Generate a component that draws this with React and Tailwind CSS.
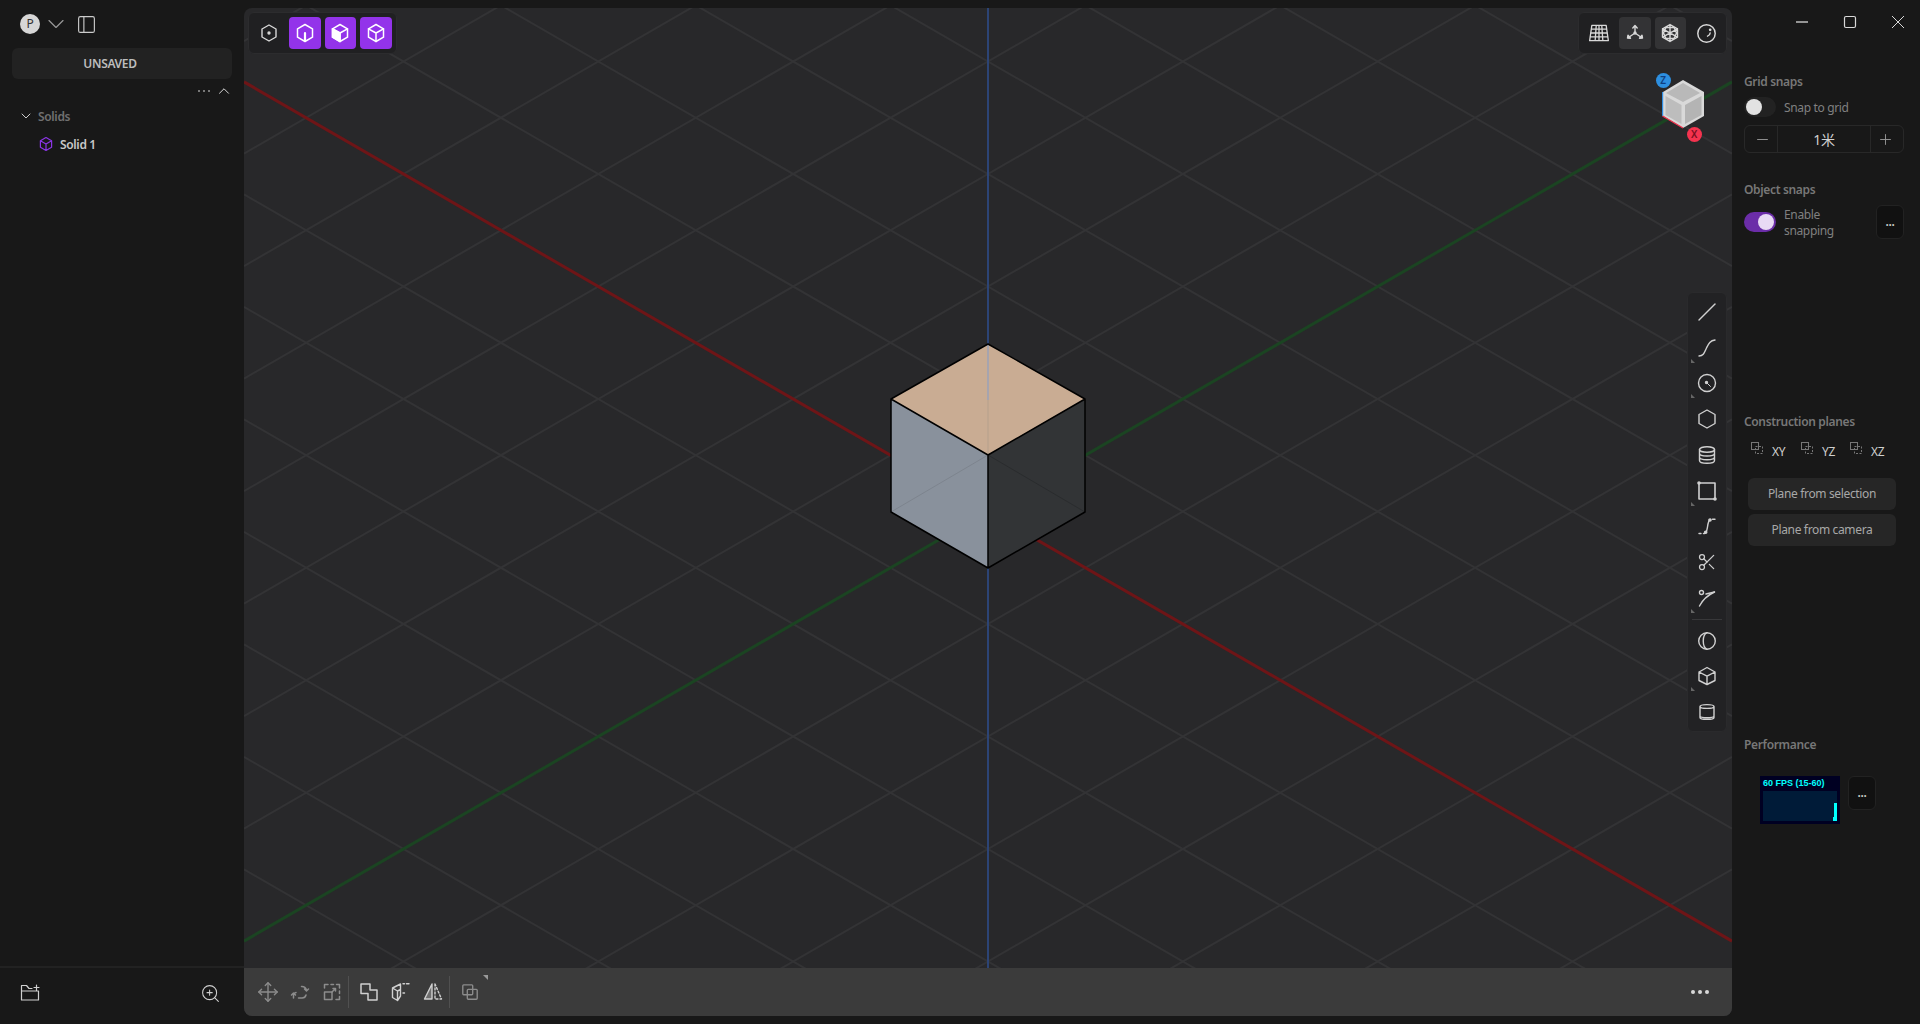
import {
  ChevronDown,
  ChevronUp,
  PanelLeft,
  ZoomIn,
  Minus,
  Plus,
  Scissors,
  Move,
} from "lucide-react";

const GRID_STEP = 112.5;
const TAN30 = 0.5774;
const OX = 744;
const OY = 503.5;
const W = 1488;

// isometric ground grid, every line is one unit away from the axis
function gridLines() {
  const out = [];
  for (let k = -14; k <= 14; k++) {
    if (k === 0) continue;
    const y0 = OY + k * GRID_STEP;
    out.push([0, y0 - OX * TAN30, W, y0 + (W - OX) * TAN30]);
    out.push([0, y0 + OX * TAN30, W, y0 - (W - OX) * TAN30]);
  }
  return out;
}

function Viewport() {
  return (
    <svg className="absolute inset-0 w-full h-full" viewBox="0 0 1488 960">
      {gridLines().map((l, i) => (
        <line key={i} x1={l[0]} y1={l[1]} x2={l[2]} y2={l[3]} stroke="#333335" strokeWidth="2" />
      ))}
      <line x1="0" y1={OY - OX * TAN30} x2={W} y2={OY + (W - OX) * TAN30} stroke="#6e1517" strokeWidth="3" />
      <line x1="0" y1={OY + OX * TAN30} x2={W} y2={OY - (W - OX) * TAN30} stroke="#1b4422" strokeWidth="3" />
      <line x1={OX} y1="0" x2={OX} y2="960" stroke="#2c4475" strokeWidth="2" />
      {/* cube */}
      <polygon points="744,336 841,391 744,447 647,391" fill="#c9ac93" />
      <polygon points="647,391 744,447 744,560 647,504" fill="#89919c" />
      <polygon points="841,391 744,447 744,560 841,504" fill="#323436" />
      <line x1="744" y1="336" x2="744" y2="392" stroke="#9ea3b6" strokeWidth="1.6" />
      <line x1="744" y1="392" x2="744" y2="447" stroke="#bba48f" strokeWidth="1.4" />
      <line x1="744" y1="447" x2="647" y2="504" stroke="#7d848e" strokeWidth="1" />
      <line x1="744" y1="447" x2="841" y2="504" stroke="#2a2c2e" strokeWidth="1" />
      <path
        d="M744 336 L841 391 V504 L744 560 L647 504 V391 Z M647 391 L744 447 L841 391 M744 447 V560"
        fill="none"
        stroke="#000"
        strokeWidth="1.5"
        strokeLinejoin="round"
      />
    </svg>
  );
}

function Ico({ children, className = "", size = 20, sw = 1.4 }) {
  return (
    <svg
      width={size}
      height={size}
      viewBox="0 0 20 20"
      fill="none"
      stroke="currentColor"
      strokeWidth={sw}
      strokeLinecap="round"
      strokeLinejoin="round"
      className={className}
    >
      {children}
    </svg>
  );
}

function CubeGlyph({ mode }) {
  return (
    <Ico sw={1.5}>
      <path d="M10 1.500 L17.500 5.800 V14.200 L10 18.500 L2.500 14.200 V5.800 Z" />
      {mode === "cut" && <path d="M10 10 V18" strokeWidth="2.2" />}
      {mode === "solid" && <path d="M2.500 5.800 L10 10 L17.500 5.800 M10 10 V18.500" />}
      {mode === "solid" && <path d="M2.500 5.800 L10 10 V18.500 L2.500 14.200 Z" fill="currentColor" />}
      {mode === "wire" && <path d="M2.500 5.800 L10 10 L17.500 5.800 M10 10 V18.500" />}
    </Ico>
  );
}

function Pill({ children, className = "" }) {
  return (
    <div className={`absolute top-1 h-[42px] w-[149px] flex items-center gap-1 px-1 rounded-md bg-[#202022] border border-[#2c2c2e] ${className}`}>
      {children}
    </div>
  );
}

function PillBtn({ children, className = "" }) {
  return <div className={`w-8 h-8 flex items-center justify-center rounded text-[#d8d8d8] ${className}`}>{children}</div>;
}

function TopLeftBar() {
  return (
    <Pill className="left-1">
      <PillBtn>
        <Ico>
          <path d="M10 2 L17 6 V14 L10 18 L3 14 V6 Z" />
          <circle cx="10" cy="10" r="1" fill="currentColor" />
        </Ico>
      </PillBtn>
      <PillBtn className="bg-[#9333ea] text-white"><CubeGlyph mode="cut" /></PillBtn>
      <PillBtn className="bg-[#9333ea] text-white"><CubeGlyph mode="solid" /></PillBtn>
      <PillBtn className="bg-[#9333ea] text-white"><CubeGlyph mode="wire" /></PillBtn>
    </Pill>
  );
}

function TopRightBar() {
  return (
    <Pill className="right-[5px]">
      <PillBtn>
        <Ico sw={1.2} size={22}>
          <path d="M3.500 3 H16.500 L18.500 17 H1.500 Z M1.900 13.500 H18.100 M2.400 10 H17.600 M3 6.500 H17 M7.500 3 L6.500 17 M10 3 V17 M12.500 3 L13.500 17" />
        </Ico>
      </PillBtn>
      <PillBtn className="bg-[#333335]">
        <Ico>
          <path d="M10 10 V3 M10 10 L3.500 14.500 M10 10 L16.500 14.500 M7.800 5 L10 2.500 L12.200 5" />
          <circle cx="10" cy="10" r="1" fill="currentColor" />
          <path d="M3 12.200 L2.500 15 L5.500 15.300 Z M17 12.200 L17.500 15 L14.500 15.300 Z" fill="currentColor" />
        </Ico>
      </PillBtn>
      <PillBtn className="bg-[#333335]">
        <Ico>
          <path d="M10 1.500 L17.500 5.800 V14.200 L10 18.500 L2.500 14.200 V5.800 Z M2.500 5.800 L17.500 14.200 M17.500 5.800 L2.500 14.200 M10 1.500 V18.500 M6 4.500 L3.500 10 L6 15.500 H14 L16.500 10 L14 4.500 Z" />
        </Ico>
      </PillBtn>
      <PillBtn>
        <Ico size={21}>
          <circle cx="10" cy="10" r="8.300" />
          <path d="M13.500 9.500 A3.500 3.500 0 0 1 11 12.500" />
          <circle cx="13.500" cy="6.500" r="0.600" fill="currentColor" />
        </Ico>
      </PillBtn>
    </Pill>
  );
}

function ViewCube() {
  return (
    <div className="absolute right-[18px] top-[58px] w-[52px] h-[70px]">
      <svg width="52" height="70" viewBox="0 0 52 70">
        <polygon points="21,14 42,26 42,50 21,62 1,50 1,26" fill="#d9d9d9" />
        <polygon points="21,17 38,27 21,36 4,27" fill="#b9b9b9" />
        <polygon points="3.500,30 19.500,39 19.500,58 3.500,49" fill="#bdbdbd" />
        <polygon points="23,39 39.500,30 39.500,49 23,58" fill="#b4b4b4" />
        <line x1="0.500" y1="26" x2="0.500" y2="50" stroke="#2f8fe6" strokeWidth="1.400" />
        <line x1="0.500" y1="50" x2="21" y2="62" stroke="#f0344f" strokeWidth="1.400" />
      </svg>
      <div className="absolute left-[-6.500px] top-[6.500px] w-[15px] h-[15px] rounded-full bg-[#2d8fe0] flex items-center justify-center text-[10px] font-semibold text-[#0f3f80] leading-none">Z</div>
      <div className="absolute left-[24.500px] top-[60.500px] w-[15px] h-[15px] rounded-full bg-[#f5334f] flex items-center justify-center text-[10px] font-semibold text-[#7a0f20] leading-none">X</div>
    </div>
  );
}

const Corner = () => (
  <span className="absolute left-[3px] bottom-[3px] w-0 h-0 border-l-[4px] border-l-[#666] border-t-[4px] border-t-transparent" />
);

function Tool({ children, corner }) {
  return (
    <div className="relative h-[35.800px] w-full flex items-center justify-center text-[#d0d0d0]">
      {children}
      {corner && <Corner />}
    </div>
  );
}

function ToolPalette() {
  return (
    <div className="absolute right-[5px] top-[284px] w-10 h-[440px] py-[1px] flex flex-col rounded-md bg-[#222224] border border-[#2a2a2c]">
      <Tool>
        <Ico><path d="M2 18 L18 2" /></Ico>
      </Tool>
      <Tool corner>
        <Ico><path d="M2 18 C7 18 7.500 14 9.500 10 C11.500 6 13 2.500 18 2" /></Ico>
      </Tool>
      <Tool corner>
        <Ico>
          <circle cx="10" cy="10" r="8.500" />
          <circle cx="9.500" cy="9.500" r="1" fill="currentColor" />
          <path d="M9.500 9.500 L13.500 13.500" strokeWidth="1" />
        </Ico>
      </Tool>
      <Tool>
        <Ico><path d="M10 1 L18 5.500 V14.500 L10 19 L2 14.500 V5.500 Z" /></Ico>
      </Tool>
      <Tool>
        <Ico>
          <ellipse cx="10" cy="4.500" rx="7.500" ry="2.800" />
          <path d="M2.500 4.500 V15.500 C2.500 17.300 6 18.300 10 18.300 C14 18.300 17.500 17.300 17.500 15.500 V4.500 M2.500 8.200 C2.500 9.900 6 11 10 11 C14 11 17.500 9.900 17.500 8.200 M2.500 12 C2.500 13.700 6 14.700 10 14.700 C14 14.700 17.500 13.700 17.500 12" />
        </Ico>
      </Tool>
      <Tool corner>
        <Ico sw={1.600}>
          <rect x="2" y="2" width="16" height="16" />
          <circle cx="2" cy="2" r="1" fill="currentColor" />
          <circle cx="18" cy="18" r="1" fill="currentColor" />
        </Ico>
      </Tool>
      <Tool>
        <Ico>
          <path d="M2 17.500 H4 M6.500 17.500 H7.500 C9.500 17.500 9.800 15 10.500 11 C11 7 11.500 4 13.500 3.500 M15.500 3.200 H18" />
          <circle cx="8.700" cy="16.300" r="1.100" fill="currentColor" />
          <circle cx="13" cy="4" r="1.100" fill="currentColor" />
        </Ico>
      </Tool>
      <Tool>
        <Scissors size={20} strokeWidth={1.500} />
      </Tool>
      <Tool corner>
        <Ico>
          <circle cx="4.500" cy="4.500" r="2" />
          <path d="M2.500 18 C5 13 9 8 17.500 4" />
          <path d="M9 6 L17.500 4" />
        </Ico>
      </Tool>
      <div className="h-px mx-1 my-[3px] bg-[#38383a]" />
      <Tool>
        <Ico>
          <circle cx="10" cy="10" r="8.300" />
          <path d="M10 1.700 C5 4 5 16 10 18.300" />
        </Ico>
      </Tool>
      <Tool corner>
        <Ico>
          <path d="M10 1.500 L18 6 V14.500 L10 18.500 L2 14.500 V6 Z M2 6 L10 10.200 L18 6 M10 10.200 V18.500" />
        </Ico>
      </Tool>
      <Tool>
        <Ico>
          <path d="M3 4.500 C3 2 17 2 17 4.500 V15.500 C17 18 3 18 3 15.500 Z M3 4.500 C3 7 17 7 17 4.500 M3 14 C3 16.300 17 16.300 17 14" />
        </Ico>
      </Tool>
    </div>
  );
}

function BottomToolbar() {
  return (
    <div className="h-12 shrink-0 bg-[#3b3b3b] flex items-center pl-2 pr-[23px] text-[#d0d0d0]">
      <div className="w-8 flex justify-center text-[#8c8c8c]"><Move size={22} strokeWidth={1.500} /></div>
      <div className="w-8 flex justify-center text-[#8c8c8c]">
        <Ico sw={1.500}>
          <path d="M3.500 16 V13 A3 3 0 0 1 6 10.500 M1.500 13 L3.500 11 L5.500 13" />
          <path d="M16.500 8 A5 5 0 0 0 11.500 4.500 M14.500 7 L16.500 9 L18.500 7 M8.500 16 H12 A4 4 0 0 0 16 13" />
        </Ico>
      </div>
      <div className="w-8 flex justify-center text-[#8c8c8c]">
        <Ico sw={1.500}>
          <path d="M2.500 10 V17.500 H10 V10 Z" />
          <path d="M2.500 6 V2.500 H6 M9 2.500 H11.500 M14.500 2.500 H17.500 V6 M17.500 9 V11.500 M17.500 14.500 V17.500 H14 M10 10 L13.500 6.500 M13.500 6.500 H11 M13.500 6.500 V9" />
        </Ico>
      </div>
      <div className="w-px h-8 bg-[#505050]" />
      <div className="w-8 ml-1 flex justify-center">
        <Ico sw={1.500}>
          <path d="M2 2 H11 V8 H18 V18 H9 V11.500 H2 Z" />
        </Ico>
      </div>
      <div className="w-8 flex justify-center">
        <Ico>
          <path d="M1.500 6 L9.500 2 V14 L6.500 18.500 L1.500 15.500 Z M1.500 6 L6.500 9 V18.500 M6.500 9 L9.500 7.500 M12 1.800 H13.500 M15.500 1.800 H18 M12 11 H13.500" />
        </Ico>
      </div>
      <div className="w-8 flex justify-center">
        <Ico>
          <path d="M9 2 V17 H1.500 Z" fill="currentColor" fillOpacity=".35" />
          <path d="M12 2 V17 H18.500 Z" strokeDasharray="2 2" />
        </Ico>
      </div>
      <div className="w-px h-8 bg-[#505050]" />
      <div className="relative w-8 ml-1 flex justify-center text-[#8c8c8c]">
        <Ico sw={1.500} size={18}>
          <rect x="2" y="2" width="11" height="11" rx="1" />
          <rect x="7" y="7" width="11" height="11" rx="1" />
        </Ico>
        <span className="absolute right-[-2px] top-[-8px] w-0 h-0 border-r-[5px] border-r-[#999] border-b-[5px] border-b-transparent" />
      </div>
      <div className="ml-auto flex gap-[3px]">
        <span className="w-1 h-1 rounded-full bg-[#d8d8d8]" />
        <span className="w-1 h-1 rounded-full bg-[#d8d8d8]" />
        <span className="w-1 h-1 rounded-full bg-[#d8d8d8]" />
      </div>
    </div>
  );
}

function LeftSidebar() {
  return (
    <aside className="w-[244px] shrink-0 flex flex-col">
      <div className="h-12 flex items-center pl-5 text-[#cfcfcf]">
        <div className="w-5 h-5 rounded-full bg-[#d6d6d6] flex items-center justify-center text-xs text-[#333]">P</div>
        <ChevronDown size={28} strokeWidth={1} className="ml-[2px] text-[#999]" />
        <PanelLeft size={21} strokeWidth={1.300} className="ml-[5.500px] text-[#ccc]" />
      </div>
      <div className="mx-3 h-[31px] pr-6 rounded-md bg-[#222222] flex items-center justify-center text-xs font-semibold text-[#bdbdbd]">UNSAVED</div>
      <div className="h-6 flex items-center justify-end pr-[11px] gap-[5px]">
        <span className="w-[2px] h-[2px] bg-[#777]" />
        <span className="w-[2px] h-[2px] ml-[-2px] bg-[#777]" />
        <span className="w-[2px] h-[2px] ml-[-2px] bg-[#777]" />
        <ChevronUp size={18} strokeWidth={1.300} className="text-[#ddd]" />
      </div>
      <div className="flex items-center h-6 pl-[18px] gap-[4px] mt-[1px]">
        <ChevronDown size={16} strokeWidth={1.500} className="text-[#ccc]" />
        <span className="text-xs font-semibold text-[#707070] pt-[2px]">Solids</span>
      </div>
      <div className="flex items-center h-6 pl-[38px] gap-[6px] mt-1">
        <svg width="16" height="16" viewBox="0 0 20 20" fill="none" stroke="#8b35e6" strokeWidth="1.500" strokeLinejoin="round">
          <path d="M10 2 L17 6 V14 L10 18 L3 14 V6 Z M3 6 L10 10 L17 6 M10 10 V18" />
        </svg>
        <span className="text-xs font-semibold text-[#c8c8c8] pt-[2px]">Solid 1</span>
      </div>
      <div className="mt-auto h-[58px] border-t-2 border-[#222] flex items-center justify-between pl-5 pr-[23.500px] pb-[6px] text-[#d0d0d0]">
        <Ico sw={1.200}>
          <path d="M1.500 17 V2.500 H6.500 L9 5.500 H12 M1.500 8 H18.500 V17 H1.500 M14 4.500 H19 M16.500 2 V7" />
        </Ico>
        <ZoomIn size={21} strokeWidth={1.200} />
      </div>
    </aside>
  );
}

function SectionTitle({ children }) {
  return <div className="text-xs font-semibold text-[#777] leading-4">{children}</div>;
}

function MoreBtn({ className = "" }) {
  return (
    <div className={`w-7 h-[34px] rounded-md bg-[#111] border border-[#222] flex items-center justify-center text-[#ccc] text-xs font-semibold ${className}`}>
      ...
    </div>
  );
}

function PlaneChip({ label, className = "" }) {
  return (
    <div className={`flex items-start ${className}`}>
      <svg width="14" height="14" viewBox="0 0 14 14" fill="none" stroke="#777" strokeWidth="1" className="mt-[-3px]">
        <rect x="1.500" y="1.500" width="7" height="7" />
        <rect x="5.500" y="5.500" width="7" height="7" strokeDasharray="2 1.500" />
      </svg>
      <span className="text-xs text-[#cfcfcf] ml-2 leading-4">{label}</span>
    </div>
  );
}

function WindowControls() {
  return (
    <div className="h-11 flex items-center gap-8 pl-[62px] text-[#d8d8d8]">
      <svg width="16" height="16" viewBox="0 0 16 16" stroke="currentColor" strokeWidth="1.300"><path d="M2 8 H14" /></svg>
      <svg width="16" height="16" viewBox="0 0 16 16" fill="none" stroke="currentColor" strokeWidth="1.200"><rect x="2.500" y="2.500" width="11" height="11" rx="1.500" /></svg>
      <svg width="16" height="16" viewBox="0 0 16 16" stroke="currentColor" strokeWidth="1"><path d="M2 2 L14 14 M14 2 L2 14" /></svg>
    </div>
  );
}

function RightPanel() {
  return (
    <aside className="w-[188px] shrink-0 flex flex-col">
      <WindowControls />
      <div className="pl-3 pr-4 mt-[30px]">
        <SectionTitle>Grid snaps</SectionTitle>
        <div className="flex items-center mt-[7px]">
          <div className="w-8 h-5 rounded-full bg-[#222] flex items-center pl-[2px]">
            <span className="w-4 h-4 rounded-full bg-[#e2e2e2]" />
          </div>
          <span className="ml-2 pt-[2px] text-xs text-[#808080]">Snap to grid</span>
        </div>
        <div className="mt-2 h-7 flex items-center rounded-md border border-[#282828] text-[#bbb]">
          <div className="w-[33px] h-full pl-[3px] flex items-center justify-center border-r border-[#282828]">
            <Minus size={17} strokeWidth={1.300} className="text-[#999]" />
          </div>
          <div className="flex-1 text-center text-sm text-[#d0d0d0] pt-[2px]">1米</div>
          <div className="w-[33px] h-full pr-[3px] flex items-center justify-center border-l border-[#282828]">
            <Plus size={17} strokeWidth={1.300} className="text-[#999]" />
          </div>
        </div>
        <div className="mt-[29px]"><SectionTitle>Object snaps</SectionTitle></div>
        <div className="flex items-center mt-[7px]">
          <div className="w-8 h-5 rounded-full bg-[#6b2da8] flex items-center justify-end pr-[2px]">
            <span className="w-4 h-4 rounded-full bg-[#e8daf4]" />
          </div>
          <span className="ml-2 w-[60px] pt-[1px] text-xs leading-4 text-[#808080]">Enable snapping</span>
          <MoreBtn className="ml-auto" />
        </div>
        <div className="mt-[175px]"><SectionTitle>Construction planes</SectionTitle></div>
        <div className="flex mt-[14px] pl-[6px]">
          <PlaneChip label="XY" className="w-[50px]" />
          <PlaneChip label="YZ" className="w-[49px]" />
          <PlaneChip label="XZ" />
        </div>
        <div className="ml-1 mr-2 mt-[18px] h-8 rounded-md bg-[#262626] flex items-center justify-center text-xs text-[#a8a8a8]">Plane from selection</div>
        <div className="ml-1 mr-2 mt-1 h-8 rounded-md bg-[#262626] flex items-center justify-center text-xs text-[#a8a8a8]">Plane from camera</div>
        <div className="mt-[191px]"><SectionTitle>Performance</SectionTitle></div>
        <div className="flex items-start mt-[23px] pl-4">
          <div className="w-20 h-12 bg-[#000022] px-[3px] pt-[1px] flex flex-col font-['Liberation_Sans',sans-serif] tracking-normal">
            <div className="text-[9px] leading-3 font-bold text-[#00ffff] whitespace-nowrap">60 FPS (15-60)</div>
            <div className="mt-[2px] w-[74px] h-[30px] bg-[#001b38] flex justify-end items-end">
              <span className="w-[1px] h-1 bg-[#00ffff]" />
              <span className="w-[3px] h-[18px] bg-[#00ffff]" />
            </div>
          </div>
          <MoreBtn className="ml-2" />
        </div>
      </div>
    </aside>
  );
}

export default function App() {
  return (
    <div className="h-screen w-full flex overflow-hidden bg-[#181818] tracking-[-0.350px] font-['Noto_Sans','Noto_Sans_CJK_SC',sans-serif]">
      <LeftSidebar />
      <main className="flex-1 my-2 rounded-lg overflow-hidden flex flex-col bg-[#28282a]">
        <div className="relative flex-1">
          <Viewport />
          <TopLeftBar />
          <TopRightBar />
          <ViewCube />
          <ToolPalette />
        </div>
        <BottomToolbar />
      </main>
      <RightPanel />
    </div>
  );
}
